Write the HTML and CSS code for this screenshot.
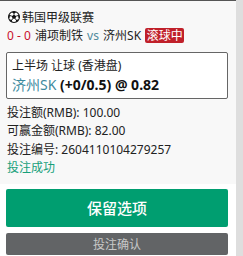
FILE: index.html
```html
<!DOCTYPE html>
<html lang="zh">
<head>
<meta charset="utf-8">
<link rel="stylesheet" href="styles.css">
</head>
<body>
<div class="page">
  <div class="main">
    <div class="panel">
      <div class="league">
        <svg class="ball" viewBox="0 0 22 22" width="12" height="12">
          <circle cx="11" cy="11" r="10" fill="#fff" stroke="#111" stroke-width="2"/>
          <polygon points="11,6.5 15,9.4 13.5,14 8.5,14 7,9.4" fill="#111"/>
          <path d="M11 1.5 L11 6.5 M15 9.4 L20 8 M13.5 14 L16.5 19 M8.5 14 L5.5 19 M7 9.4 L2 8" stroke="#111" stroke-width="1.8"/>
          <path d="M6.5 2.2 L11 0.8 L15.5 2.2 L11 4.5 Z M20.3 6.5 L21.2 13 L18.2 11.5 Z M1.7 6.5 L0.8 13 L3.8 11.5 Z M14 20.5 L18.5 17.5 L19.5 15 L15.5 16.5 Z M8 20.5 L3.5 17.5 L2.5 15 L6.5 16.5 Z" fill="#111"/>
        </svg><span>韩国甲级联赛</span>
      </div>
      <div class="match">
        <span class="score">0 - 0</span> <span>浦项制铁</span> <span class="vs">vs</span> <span>济州SK</span> <span class="live">滚球中</span>
      </div>
      <div class="selection">
        <div class="market">上半场 让球 (香港盘)</div>
        <div class="pick"><span class="team">济州SK</span> <b>(+0/0.5) @ 0.82</b></div>
      </div>
      <div class="details">
        <div>投注额(RMB): 100.00</div>
        <div>可赢金额(RMB): 82.00</div>
        <div>投注编号: 2604110104279257</div>
        <div class="success">投注成功</div>
      </div>
    </div>
    <div class="actions">
      <button class="btn keep">保留选项</button>
      <button class="btn confirm">投注确认</button>
    </div>
  </div>
  <div class="strip"></div>
</div>
</body>
</html>
```
FILE: styles.css
```css
html, body {
  margin: 0;
  padding: 0;
  background: #fff;
}
body {
  font-family: "Noto Sans", "Noto Sans CJK SC", sans-serif;
  font-size: 12px;
  color: #222;
}
.page {
  display: flex;
  height: 256px;
}
.main {
  width: 236px;
  display: flex;
  flex-direction: column;
}
.strip {
  width: 7px;
  background: #dedede;
}
.panel {
  background: #f8f8f8;
  border-top: 1px solid #555;
  padding: 6px 8px 6px 6px;
}
.league {
  display: flex;
  align-items: center;
  height: 19px;
  padding-left: 2px;
}
.ball {
  margin-right: 2px;
}
.match {
  height: 19px;
  line-height: 19px;
  padding-left: 1px;
  white-space: nowrap;
}
.match > span {
  margin-right: 1px;
}
.score {
  color: #c8102e;
}
.vs {
  color: #4f8a9c;
}
.live {
  display: inline-block;
  background: #c0202a;
  color: #fff;
  line-height: 15px;
  padding: 0 1.5px;
  border-radius: 2px;
}
.selection {
  margin-top: 7px;
  background: #fff;
  border: 1px solid #666;
  border-radius: 2px;
  padding: 4px 5px 3px 5px;
}
.market {
  line-height: 18px;
}
.pick {
  line-height: 20px;
  font-size: 14px;
}
.pick .team {
  color: #3d8a9e;
  font-size: 14px;
}
.pick b {
  font-weight: 700;
  color: #111;
}
.details {
  margin-top: 5px;
  line-height: 18.4px;
  padding-left: 1px;
}
.success {
  color: #17a07a;
}
.actions {
  display: flex;
  flex-direction: column;
  gap: 6px;
  padding: 5px 8px 0 6px;
}
.btn {
  border: none;
  border-radius: 2px;
  font-family: "Noto Sans", "Noto Sans CJK SC", sans-serif;
  padding: 0;
  margin: 0;
}
.keep {
  height: 38px;
  background: #009e70;
  color: #fff;
  font-size: 15px;
  font-weight: 500;
}
.confirm {
  height: 22px;
  background: #626466;
  color: #c8c8c8;
  font-size: 12px;
}
```
